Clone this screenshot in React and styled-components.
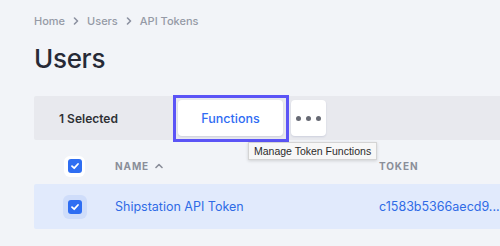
import React from "react";
import styled, { createGlobalStyle } from "styled-components";

const Global = createGlobalStyle`
  html, body { margin: 0; padding: 0; background: #f2f4f8; }
  body { font-family: Inter, "Noto Sans", "Liberation Sans", sans-serif; -webkit-font-smoothing: antialiased; }
  * { box-sizing: border-box; }
`;

const Page = styled.div`
  width: 500px;
  height: 246px;
  overflow: hidden;
  padding: 14px 0 0 34px;
  background: #f2f4f8;
`;

const Crumbs = styled.nav`
  display: flex;
  align-items: center;
  gap: 8px;
  height: 14px;
  font-size: 11px;
  font-weight: 500;
  color: #959aa6;
`;

const Crumb = styled.span`
  line-height: 14px;
`;

const Title = styled.h1`
  margin: 15px 0 0 0;
  font-size: 26px;
  line-height: 32px;
  font-weight: 500;
  color: #272a36;
  letter-spacing: -0.3px;
`;

const Toolbar = styled.div`
  margin-top: 21px;
  height: 44px;
  display: flex;
  align-items: center;
  background: #e8e9ee;
  padding-left: 25px;
  border-radius: 2px 0 0 2px;
`;

const SelectedLabel = styled.div`
  width: 119px;
  font-size: 12px;
  font-weight: 600;
  color: #2f3136;
`;

const BtnWrap = styled.div`
  position: relative;
  display: flex;
  gap: 8px;
`;

const ToolButton = styled.button`
  position: relative;
  height: 36px;
  width: ${(p) => p.$w}px;
  border: none;
  border-radius: 4px;
  background: #fff;
  box-shadow: 0 1px 2px rgba(40, 60, 120, 0.14);
  font-family: inherit;
  font-size: 12.5px;
  font-weight: 500;
  color: #2f6cf3;
  display: flex;
  align-items: center;
  justify-content: center;
  gap: 5px;
  padding: 0;
  outline: none;

  &::after {
    content: "";
    display: ${(p) => (p.$focus ? "block" : "none")};
    position: absolute;
    left: -5px;
    top: -5px;
    right: -6px;
    bottom: -6px;
    border: 3px solid #5b54f6;
    pointer-events: none;
  }
`;

const Dot = styled.span`
  width: 5px;
  height: 5px;
  border-radius: 50%;
  background: #676a74;
`;

const Tooltip = styled.div`
  position: absolute;
  left: 70px;
  top: 42px;
  padding: 2px 5px 2px 5px;
  background: #f7f7f7;
  border: 1px solid #d4d4d4;
  box-shadow: 0 1px 3px rgba(0, 0, 0, 0.15);
  font-family: "Liberation Sans", sans-serif;
  font-size: 10.5px;
  line-height: 12px;
  color: #2b2b2b;
  white-space: nowrap;
  z-index: 2;
`;

const Row = styled.div`
  display: grid;
  grid-template-columns: 81px 264px 1fr;
  align-items: center;
  height: ${(p) => (p.$header ? 44 : 45)}px;
  padding-top: ${(p) => (p.$header ? 8 : 0)}px;
  background: ${(p) => (p.$selected ? "#e1eafc" : "transparent")};
  border-radius: 2px 0 0 2px;
`;

const CheckCell = styled.div`
  display: flex;
  justify-content: center;
`;

const Halo = styled.div`
  width: ${(p) => p.$size}px;
  height: ${(p) => p.$size}px;
  border-radius: 6px;
  background: ${(p) => p.$bg};
  display: flex;
  align-items: center;
  justify-content: center;
`;

const Box = styled.div`
  width: 14px;
  height: 14px;
  border-radius: 3px;
  background: #2f6ef2;
  display: flex;
  align-items: center;
  justify-content: center;
`;

const HeadText = styled.div`
  display: flex;
  align-items: center;
  gap: 6px;
  font-size: 10px;
  font-weight: 700;
  letter-spacing: 0.9px;
  color: #8a8e99;
`;

const CellText = styled.div`
  font-size: 12.5px;
  color: #2f6be6;
  white-space: nowrap;
`;

const Chevron = () => (
  <svg width="6" height="8" viewBox="0 0 6 8">
    <polyline points="1.5,1 4.5,4 1.5,7" fill="none" stroke="#8c91a0" strokeWidth="1.6" strokeLinecap="round" strokeLinejoin="round" />
  </svg>
);

const Caret = () => (
  <svg width="8" height="6" viewBox="0 0 8 6">
    <polyline points="1,4.5 4,1.5 7,4.5" fill="none" stroke="#8a8e99" strokeWidth="1.6" strokeLinecap="round" strokeLinejoin="round" />
  </svg>
);

const Check = () => (
  <Box>
    <svg width="10" height="10" viewBox="0 0 10 10">
      <polyline points="2,5.2 4.2,7.2 8,3" fill="none" stroke="#fff" strokeWidth="1.8" strokeLinecap="round" strokeLinejoin="round" />
    </svg>
  </Box>
);

export default function App() {
  return (
    <>
      <Global />
      <Page>
        <Crumbs>
          <Crumb>Home</Crumb>
          <Chevron />
          <Crumb>Users</Crumb>
          <Chevron />
          <Crumb>API Tokens</Crumb>
        </Crumbs>
        <Title>Users</Title>
        <Toolbar>
          <SelectedLabel>1 Selected</SelectedLabel>
          <BtnWrap>
            <ToolButton $w={105} $focus>Functions</ToolButton>
            <ToolButton $w={35} aria-label="More">
              <Dot />
              <Dot />
              <Dot />
            </ToolButton>
            <Tooltip>Manage Token Functions</Tooltip>
          </BtnWrap>
        </Toolbar>
        <Row $header>
          <CheckCell>
            <Halo $size={21} $bg="#ffffff">
              <Check />
            </Halo>
          </CheckCell>
          <HeadText>
            NAME <Caret />
          </HeadText>
          <HeadText>TOKEN</HeadText>
        </Row>
        <Row $selected>
          <CheckCell>
            <Halo $size={24} $bg="#cfddfa">
              <Check />
            </Halo>
          </CheckCell>
          <CellText>Shipstation API Token</CellText>
          <CellText>c1583b5366aecd9...</CellText>
        </Row>
      </Page>
    </>
  );
}
